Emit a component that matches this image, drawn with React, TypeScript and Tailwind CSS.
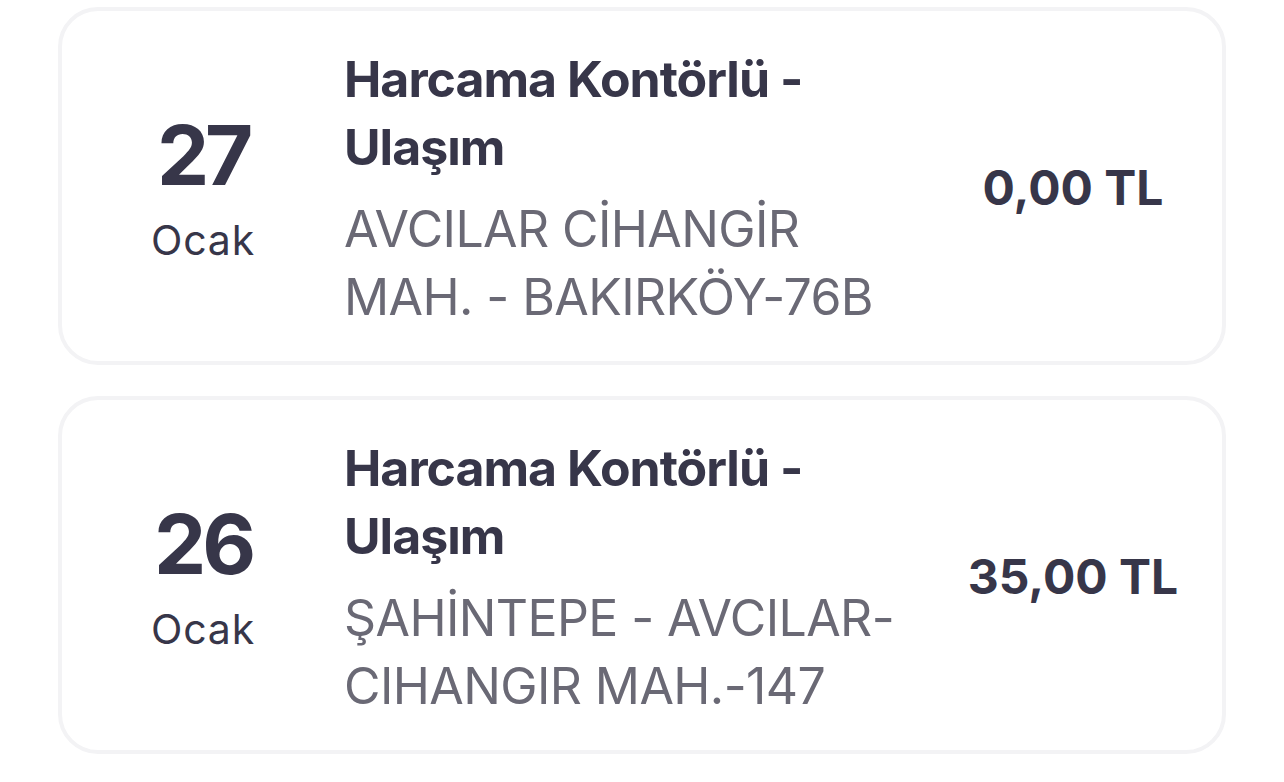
import React from "react";

type Item = {
  day: string;
  month: string;
  title: string;
  subtitle: string;
  amount: string;
};

const items: Item[] = [
  {
    day: "27",
    month: "Ocak",
    title: "Harcama Kontörlü - Ulaşım",
    subtitle: "AVCILAR CİHANGİR MAH. - BAKIRKÖY-76B",
    amount: "0,00 TL",
  },
  {
    day: "26",
    month: "Ocak",
    title: "Harcama Kontörlü - Ulaşım",
    subtitle: "ŞAHİNTEPE - AVCILAR-CIHANGIR MAH.-147",
    amount: "35,00 TL",
  },
];

function Card({ item }: { item: Item }) {
  return (
    <div className="flex items-center rounded-[40px] border-4 border-[#f3f3f5] bg-white pt-[34px] pb-[30px]">
      <div className="flex w-[282px] shrink-0 flex-col items-center text-[#373649]">
        <div className="text-[83px] font-bold leading-[83px] tracking-[-0.05em]">{item.day}</div>
        <div className="mt-[21px] text-[41px] font-normal leading-[44px] tracking-[0.02em]">{item.month}</div>
      </div>
      <div className="w-[580px] shrink-0">
        <div className="text-[50px] font-bold leading-[68px] tracking-[-0.02em] text-[#373649]">
          {item.title}
        </div>
        <div className="mt-[14px] text-[50px] font-normal leading-[68px] tracking-[-0.012em] text-[#6a6975]">
          {item.subtitle}
        </div>
      </div>
      <div className="flex-1 text-center text-[48px] font-bold text-[#373649]">{item.amount}</div>
    </div>
  );
}

export default function App() {
  return (
    <div
      className="flex min-h-[782px] flex-col gap-[31px] bg-white px-[58px] pt-[7px]"
      style={{ fontFamily: "Inter, 'Noto Sans', sans-serif" }}
    >
      {items.map((it, i) => (
        <Card key={i} item={it} />
      ))}
    </div>
  );
}
